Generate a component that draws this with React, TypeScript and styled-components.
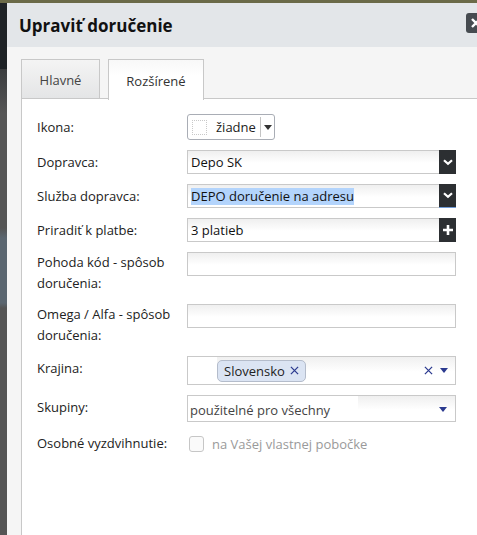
import React from "react";
import styled, { createGlobalStyle } from "styled-components";

const Global = createGlobalStyle`
  html, body { margin: 0; padding: 0; }
  body { font-family: "Open Sans", "Noto Sans", Arial, sans-serif; color: #222; }
  * { box-sizing: border-box; }
`;

const Page = styled.div`
  width: 477px;
  height: 535px;
  overflow: hidden;
  display: grid;
  grid-template-rows: 3px 1fr;
  background: #6b6a48;
`;

const Lower = styled.div`
  display: grid;
  grid-template-columns: 7px 1fr;
  min-height: 0;
`;

const Backdrop = styled.div`
  background: linear-gradient(#1e2226 0px, #1e2226 66px, #3a3c3e 66px, #555 110px, #555 225px, #5b6670 235px, #5b6670 300px, #555 305px, #555 100%);
`;

const Modal = styled.div`
  width: 483px;
  display: flex;
  flex-direction: column;
  background: #f5f5f5;
`;

const Header = styled.div`
  height: 44px;
  flex: none;
  display: flex;
  align-items: center;
  padding: 0 4px 0 12px;
  background: #e3e6e9;
`;

const Title = styled.h1`
  margin: 0;
  font-size: 17px;
  font-weight: 700;
  color: #111;
`;

const CloseButton = styled.button`
  margin-left: auto;
  margin-top: -4px;
  width: 20px;
  height: 20px;
  border: none;
  border-radius: 3px;
  background: #464b50;
  color: #fff;
  padding: 0;
  display: flex;
  align-items: center;
  justify-content: center;
`;

const Body = styled.div`
  flex: 1;
  padding: 12px 0 0 14px;
  display: flex;
  flex-direction: column;
`;

const Tabs = styled.div`
  display: flex;
  gap: 8px;
  align-items: flex-start;
  position: relative;
  z-index: 1;
`;

const Tab = styled.div<{ $active?: boolean }>`
  width: ${(p) => (p.$active ? 96 : 79)}px;
  height: ${(p) => (p.$active ? 41 : 40)}px;
  display: flex;
  align-items: center;
  justify-content: center;
  padding-top: 2px;
  font-size: 13px;
  color: ${(p) => (p.$active ? "#333" : "#444")};
  border: 1px solid #c8c8c8;
  border-bottom: ${(p) => (p.$active ? "none" : "1px solid #c8c8c8")};
  background: ${(p) =>
    p.$active ? "linear-gradient(#f8f8f8, #fff 40%)" : "linear-gradient(#f4f4f4, #e4e5e6)"};
`;

const Panel = styled.div`
  flex: 1;
  margin-top: -2px;
  background: #fff;
  border-top: 1px solid #c8c8c8;
  border-left: 1px solid #c8c8c8;
  padding: 15px 0 0 15px;
`;

const Form = styled.div`
  display: grid;
  grid-template-columns: 150px 269px;
  row-gap: 10px;
  align-items: center;
`;

const Label = styled.div<{ $multi?: boolean; $lift?: number }>`
  font-size: 13px;
  line-height: 21px;
  color: #222;
  align-self: ${(p) => (p.$multi ? "start" : "center")};
  margin-top: ${(p) => -(p.$lift ?? 0)}px;
`;

const Field = styled.div<{ $multi?: boolean }>`
  align-self: ${(p) => (p.$multi ? "start" : "center")};
`;

const InputBox = styled.div<{ $h?: number }>`
  height: ${(p) => p.$h ?? 24}px;
  border: 1px solid #c9c9c9;
  background: linear-gradient(#efefef, #fff 55%);
  display: flex;
  align-items: center;
  font-size: 13px;
  color: #111;
  padding-left: 3px;
`;

const Highlight = styled.span`
  background: #b3d4fc;
  line-height: 17px;
`;

const DarkButton = styled.div<{ $focus?: boolean }>`
  margin-left: auto;
  width: 17px;
  height: 24px;
  margin-top: -1px;
  margin-bottom: -1px;
  margin-right: -1px;
  background: #2c2f32;
  display: flex;
  align-items: center;
  justify-content: center;
  border-bottom: ${(p) => (p.$focus ? "1px solid #6f9ad6" : "none")};
`;

const IconSelect = styled.div`
  width: 88px;
  height: 26px;
  border: 1px solid #a9adb5;
  border-radius: 3px;
  display: flex;
  align-items: center;
  padding-left: 4px;
  font-size: 13px;
  color: #222;
  background: #fff;
`;

const DottedSquare = styled.span`
  width: 15px;
  height: 15px;
  border: 1px dotted #c9c9c9;
  margin-right: 9px;
`;

const SelectDivider = styled.span`
  width: 1px;
  height: 20px;
  background: #c4c4c4;
  margin-left: 4px;
  margin-right: 3px;
`;

const TagArea = styled.div`
  height: 29px;
  border: 1px solid #c9c9c9;
  background: linear-gradient(90deg, #fff 0 29px, transparent 29px), linear-gradient(#f0f0f0, #fff 55%);
  display: flex;
  align-items: center;
  padding-left: 29px;
  padding-right: 7px;
`;

const Tag = styled.span`
  height: 22px;
  display: inline-flex;
  align-items: center;
  gap: 5px;
  padding: 0 6px 0 6px;
  border: 1px solid #b4bccb;
  border-radius: 5px;
  background: #dbe4f3;
  font-size: 13px;
  color: #222;
`;

const Controls = styled.span`
  margin-left: auto;
  display: flex;
  align-items: center;
  gap: 7px;
`;

const GroupSelect = styled.div`
  height: 27px;
  border: 1px solid #c9c9c9;
  background: linear-gradient(90deg, #fff 0 170px, transparent 170px), linear-gradient(#efefef, #fff 55%);
  display: flex;
  align-items: center;
  padding: 2px 8px 0 2px;
  font-size: 13px;
  color: #444;
`;

const CheckRow = styled.label`
  display: flex;
  align-items: center;
  gap: 8px;
  padding-left: 2px;
  font-size: 13px;
  color: #9a9a9a;
`;

const Checkbox = styled.span`
  width: 15px;
  height: 16px;
  border: 1px solid #c6c6c6;
  border-radius: 3px;
  background: #fafafa;
`;

const Caret = ({ color = "#2b3a8f" }: { color?: string }) => (
  <svg width="8" height="5" viewBox="0 0 8 5">
    <path d="M0 0h8L4 5z" fill={color} />
  </svg>
);

const Chevron = () => (
  <svg width="10" height="7" viewBox="0 0 10 7">
    <path d="M1 1.2l4 3.6 4-3.6" stroke="#fff" strokeWidth="2.2" fill="none" />
  </svg>
);

const Plus = () => (
  <svg width="10" height="10" viewBox="0 0 10 10">
    <path d="M5 0v10M0 5h10" stroke="#fff" strokeWidth="2.6" />
  </svg>
);

const Cross = ({ size = 9, color = "#2b3a8f", w = 1.4 }: { size?: number; color?: string; w?: number }) => (
  <svg width={size} height={size} viewBox="0 0 10 10">
    <path d="M1 1l8 8M9 1l-8 8" stroke={color} strokeWidth={w} />
  </svg>
);

export default function App() {
  return (
    <>
      <Global />
      <Page>
        <div />
        <Lower>
          <Backdrop />
          <Modal>
            <Header>
              <Title>Upraviť doručenie</Title>
              <CloseButton>
                <Cross size={10} color="#fff" w={2.4} />
              </CloseButton>
            </Header>
            <Body>
              <Tabs>
                <Tab>Hlavné</Tab>
                <Tab $active>Rozšírené</Tab>
              </Tabs>
              <Panel>
                <Form>
                  <Label>Ikona:</Label>
                  <Field>
                    <IconSelect>
                      <DottedSquare />
                      žiadne
                      <SelectDivider />
                      <Caret color="#333" />
                    </IconSelect>
                  </Field>

                  <Label>Dopravca:</Label>
                  <Field>
                    <InputBox>
                      Depo SK
                      <DarkButton>
                        <Chevron />
                      </DarkButton>
                    </InputBox>
                  </Field>

                  <Label>Služba dopravca:</Label>
                  <Field>
                    <InputBox>
                      <Highlight>DEPO doručenie na adresu</Highlight>
                      <DarkButton $focus>
                        <Chevron />
                      </DarkButton>
                    </InputBox>
                  </Field>

                  <Label>Priradiť k platbe:</Label>
                  <Field>
                    <InputBox>
                      3 platieb
                      <DarkButton>
                        <Plus />
                      </DarkButton>
                    </InputBox>
                  </Field>

                  <Label $multi>
                    Pohoda kód - spôsob
                    <br />
                    doručenia:
                  </Label>
                  <Field $multi>
                    <InputBox />
                  </Field>

                  <Label $multi>
                    Omega / Alfa - spôsob
                    <br />
                    doručenia:
                  </Label>
                  <Field $multi>
                    <InputBox />
                  </Field>

                  <Label $lift={4}>Krajina:</Label>
                  <Field>
                    <TagArea>
                      <Tag>
                        Slovensko
                        <Cross size={9} />
                      </Tag>
                      <Controls>
                        <Cross size={9} />
                        <Caret />
                      </Controls>
                    </TagArea>
                  </Field>

                  <Label $lift={2}>Skupiny:</Label>
                  <Field>
                    <GroupSelect>
                      použitelné pro všechny
                      <Controls>
                        <Caret />
                      </Controls>
                    </GroupSelect>
                  </Field>

                  <Label $lift={-1}>Osobné vyzdvihnutie:</Label>
                  <Field style={{ marginTop: 2 }}>
                    <CheckRow>
                      <Checkbox />
                      na Vašej vlastnej pobočke
                    </CheckRow>
                  </Field>
                </Form>
              </Panel>
            </Body>
          </Modal>
        </Lower>
      </Page>
    </>
  );
}
